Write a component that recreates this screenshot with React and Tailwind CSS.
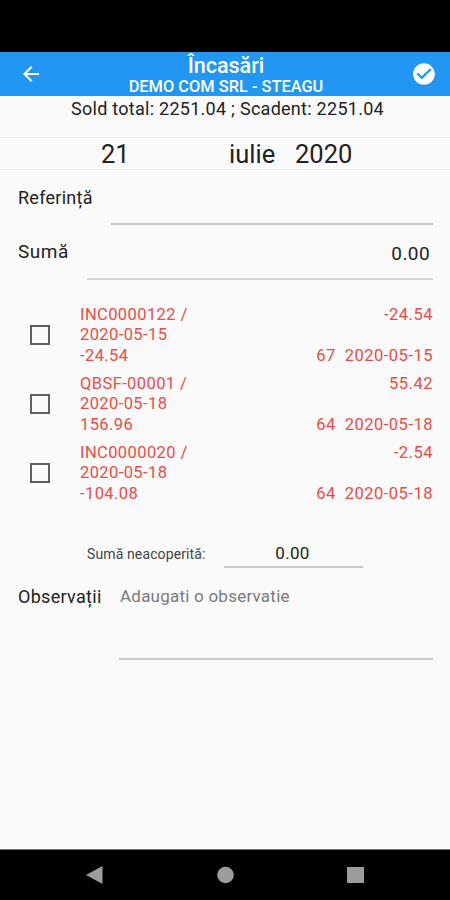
const invoices = [
  { doc: "INC0000122 /", date: "2020-05-15", total: "-24.54", rest: "-24.54", days: "67", due: "2020-05-15" },
  { doc: "QBSF-00001 /", date: "2020-05-18", total: "156.96", rest: "55.42", days: "64", due: "2020-05-18" },
  { doc: "INC0000020 /", date: "2020-05-18", total: "-104.08", rest: "-2.54", days: "64", due: "2020-05-18" },
];

function Header() {
  return (
    <header className="flex h-11 items-center bg-[#2196f3] pl-[19px] pr-[13px] text-white">
      <svg className="h-6 w-6 shrink-0" viewBox="0 0 24 24" fill="currentColor">
        <path d="M20 11H7.83l5.59-5.59L12 4l-8 8 8 8 1.41-1.41L7.83 13H20v-2z" />
      </svg>
      <div className="flex flex-1 flex-col items-center pr-[2px] font-medium">
        <h1 className="h-[23px] text-[21.500px] leading-[25px]">Încasări</h1>
        <p className="h-[19px] text-[16.400px] leading-[21px]">DEMO COM SRL - STEAGU</p>
      </div>
      <svg className="h-[26px] w-[26px] shrink-0" viewBox="0 0 24 24" fill="currentColor">
        <path d="M12 2C6.48 2 2 6.48 2 12s4.480 10 10 10 10-4.480 10-10S17.520 2 12 2zm-2 15l-5-5 1.410-1.410L10 14.170l7.590-7.590L19 8l-9 9z" />
      </svg>
    </header>
  );
}

function InvoiceRow({ item }) {
  return (
    <div className="flex h-[69px] text-[16.5px] leading-[20.300px] tracking-[0.400px] text-[#ee4b45]">
      <div className="flex w-20 shrink-0 items-start pl-[30px] pt-[20px]">
        <div className="h-5 w-5 border-2 border-[#5f5f5f]" />
      </div>
      <div className="flex flex-1 flex-col">
        <span>{item.doc}</span>
        <span>{item.date}</span>
        <span>{item.total}</span>
      </div>
      <div className="flex h-[61px] flex-col items-end justify-between pr-[17px] tracking-[0.500px]">
        <span>{item.rest}</span>
        <div className="flex gap-[9px]">
          <span>{item.days}</span>
          <span>{item.due}</span>
        </div>
      </div>
    </div>
  );
}

export default function App() {
  return (
    <div className="flex h-[900px] w-[450px] flex-col overflow-hidden bg-[#fafafa] font-['Roboto',sans-serif] text-[#222]">
      <div className="h-[52px] shrink-0 bg-black" />
      <Header />
      <p className="h-[41px] pl-[71px] pt-[2px] text-[18px] leading-[22px] tracking-[0.270px] whitespace-nowrap">
        Sold total: 2251.04 ; Scadent: 2251.04
      </p>
      <div className="flex h-[33px] items-center border-y border-[#eeeeee] text-[25.500px] leading-[30px]">
        <span className="w-[130px] pl-[101px]">21</span>
        <span className="ml-[99px] w-[66px]">iulie</span>
        <span>2020</span>
      </div>
      <div className="flex h-[55px] pl-[18px] pr-[17px]">
        <span className="w-[93px] pt-[17px] text-[18px] leading-[22px] tracking-[0.270px]">Referință</span>
        <div className="flex-1 border-b-2 border-[#c6c6c6]" />
      </div>
      <div className="flex h-[55px] pl-[18px] pr-[17px]">
        <span className="w-[69px] pt-[15px] text-[19px] leading-[24px] tracking-[0.500px]">Sumă</span>
        <div className="flex-1 border-b-2 border-[#d4d4d4] pr-[3px] pt-[17px] text-right text-[19px] leading-[24px] tracking-[0.400px]">0.00</div>
      </div>
      <div className="pt-[25px]">
        {invoices.map((item) => (
          <InvoiceRow key={item.doc} item={item} />
        ))}
      </div>
      <div className="mt-[29px] flex h-[27px] pl-[87px]">
        <span className="w-[137px] pt-[3px] text-[14px] leading-[20px] tracking-[0.120px] text-[#444]">Sumă neacoperită:</span>
        <div className="w-[139px] border-b-2 border-[#c9c9c9] pr-[2px] text-center text-[17px] leading-[24px] tracking-[0.300px]">0.00</div>
      </div>
      <div className="flex h-[92px] pl-[18px] pr-[17px]">
        <span className="w-[101px] pt-[18px] text-[18px] leading-[22px] tracking-[0.300px]">Observații</span>
        <div className="flex-1 border-b-2 border-[#cbcbcb] pt-[17px] pl-[1px] text-[17px] leading-[22px] tracking-[0.230px] text-[#7b7b7b]">Adaugati o observatie</div>
      </div>
      <nav className="mt-auto flex h-[51px] shrink-0 items-center border-t border-[#707070] bg-black text-[#9c9c9c]">
        <svg className="h-12 w-full" viewBox="0 0 450 48" fill="currentColor">
          <path d="M86 24 102.500 15v18z" />
          <circle cx="225.500" cy="24" r="8.300" />
          <rect x="347" y="16" width="17" height="16" />
        </svg>
      </nav>
    </div>
  );
}
